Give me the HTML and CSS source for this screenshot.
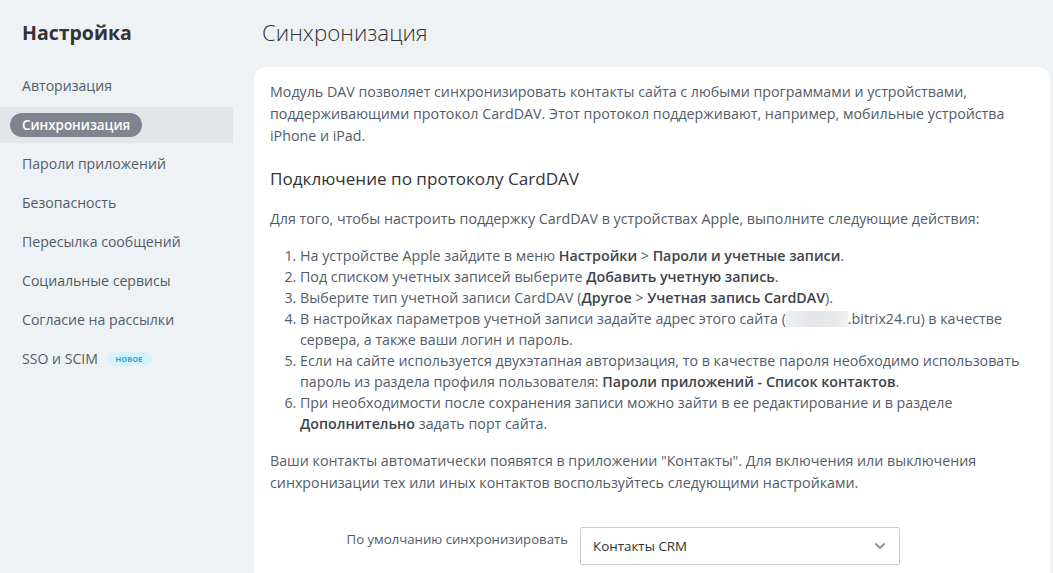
FILE: index.html
```html
<!DOCTYPE html>
<html lang="ru">
<head>
<meta charset="utf-8">
<title>Синхронизация</title>
<link rel="stylesheet" href="styles.css">
</head>
<body>
<div class="layout">
  <aside class="sidebar">
    <h1 class="sidebar-title">Настройка</h1>
    <nav class="nav">
      <div class="nav-item">Авторизация</div>
      <div class="nav-item nav-item--active"><span class="nav-pill">Синхронизация</span></div>
      <div class="nav-item">Пароли приложений</div>
      <div class="nav-item">Безопасность</div>
      <div class="nav-item">Пересылка сообщений</div>
      <div class="nav-item">Социальные сервисы</div>
      <div class="nav-item">Согласие на рассылки</div>
      <div class="nav-item">SSO и SCIM <span class="badge">НОВОЕ</span></div>
    </nav>
  </aside>
  <main class="main">
    <h2 class="page-title">Синхронизация</h2>
    <section class="card">
      <p class="text intro">Модуль DAV позволяет синхронизировать контакты сайта с любыми программами и устройствами, поддерживающими протокол CardDAV. Этот протокол поддерживают, например, мобильные устройства iPhone и iPad.</p>
      <h3 class="section-title">Подключение по протоколу CardDAV</h3>
      <p class="text lead">Для того, чтобы настроить поддержку CardDAV в устройствах Apple, выполните следующие действия:</p>
      <ol class="steps">
        <li>На устройстве Apple зайдите в меню <b>Настройки</b> &gt; <b>Пароли и учетные записи</b>.</li>
        <li>Под списком учетных записей выберите <b>Добавить учетную запись</b>.</li>
        <li>Выберите тип учетной записи CardDAV (<b>Другое</b> &gt; <b>Учетная запись CardDAV</b>).</li>
        <li>В настройках параметров учетной записи задайте адрес этого сайта (<span class="blur"></span>.bitrix24.ru) в качестве сервера, а также ваши логин и пароль.</li>
        <li>Если на сайте используется двухэтапная авторизация, то в качестве пароля необходимо использовать пароль из раздела профиля пользователя: <b>Пароли приложений - Список контактов</b>.</li>
        <li>При необходимости после сохранения записи можно зайти в ее редактирование и в разделе <b>Дополнительно</b> задать порт сайта.</li>
      </ol>
      <p class="text outro">Ваши контакты автоматически появятся в приложении "Контакты". Для включения или выключения синхронизации тех или иных контактов воспользуйтесь следующими настройками.</p>
      <div class="form-row">
        <label class="form-label">По умолчанию синхронизировать</label>
        <div class="select">
          <span class="select-value">Контакты CRM</span>
          <svg class="select-arrow" width="12" height="8" viewBox="0 0 12 8"><path d="M1.5 1.5 6 6l4.5-4.5" fill="none" stroke="#8a9099" stroke-width="1.8"/></svg>
        </div>
      </div>
    </section>
  </main>
</div>
</body>
</html>
```
FILE: styles.css
```css
* { box-sizing: border-box; }
html, body {
  margin: 0;
  padding: 0;
  height: 100%;
  overflow: hidden;
  background: #eef2f4;
  font-family: "Open Sans", "Noto Sans", sans-serif;
  color: #525c69;
}
.layout {
  display: flex;
  height: 100vh;
}
.sidebar {
  width: 233px;
  flex-shrink: 0;
}
.sidebar-title {
  margin: 0;
  padding: 20px 22px 0;
  font-size: 19.5px;
  line-height: 26px;
  font-weight: 700;
  color: #333;
}
.nav {
  margin-top: 22px;
}
.nav-item {
  height: 36px;
  line-height: 36px;
  margin-bottom: 3px;
  padding-left: 22px;
  font-size: 14.1px;
  color: #525c69;
  white-space: nowrap;
}
.nav-item--active {
  background: #e2e6e9;
  padding-left: 10px;
  display: flex;
  align-items: center;
}
.nav-pill {
  display: inline-block;
  background: #7f848e;
  color: #fff;
  font-weight: 600;
  font-size: 13.4px;
  line-height: 24px;
  height: 24px;
  padding: 0 12px;
  border-radius: 12px;
}
.badge {
  display: inline-block;
  vertical-align: middle;
  margin-left: 5px;
  margin-top: -3px;
  height: 14px;
  line-height: 14px;
  padding: 0 9px;
  border-radius: 7px;
  background: #d5f3fd;
  color: #2fa7da;
  font-size: 7.5px;
  font-weight: 700;
}
.main {
  flex: 1;
  display: flex;
  flex-direction: column;
  padding: 18px 3px 0 21px;
  min-width: 0;
}
.page-title {
  margin: 0 0 19px;
  padding-left: 8px;
  font-size: 22.3px;
  line-height: 30px;
  font-weight: 300;
  color: #333;
}
.card {
  flex: 1;
  background: #fff;
  border-radius: 12px 12px 0 0;
  padding: 14px 16px 8px;
}
.text {
  margin: 0;
  font-size: 14.25px;
  line-height: 22px;
}
.section-title {
  margin: 20px 0 17px;
  font-size: 17.1px;
  line-height: 24px;
  font-weight: 400;
  color: #333;
}
.steps {
  margin: 15px 0 16px;
  padding-left: 30px;
  font-size: 14.25px;
  line-height: 21px;
}
.steps b {
  font-weight: 600;
  color: #3d434b;
}
.blur {
  display: inline-block;
  width: 62px;
  height: 16px;
  vertical-align: -3px;
  background: linear-gradient(90deg, #eef0f2, #e3e5e8 40%, #e6e8ea 80%, #f1f2f3);
}
.form-row {
  display: flex;
  align-items: flex-start;
  margin-top: 33px;
}
.form-label {
  width: 310px;
  padding-top: 3px;
  padding-right: 12px;
  text-align: right;
  font-size: 13.2px;
  line-height: 18px;
  color: #525c69;
}
.select {
  width: 320px;
  height: 38px;
  border: 1px solid #c6cdd3;
  border-radius: 2px;
  display: flex;
  align-items: center;
  justify-content: space-between;
  padding: 0 13px 0 12px;
  font-size: 13.4px;
  color: #333;
}
```
